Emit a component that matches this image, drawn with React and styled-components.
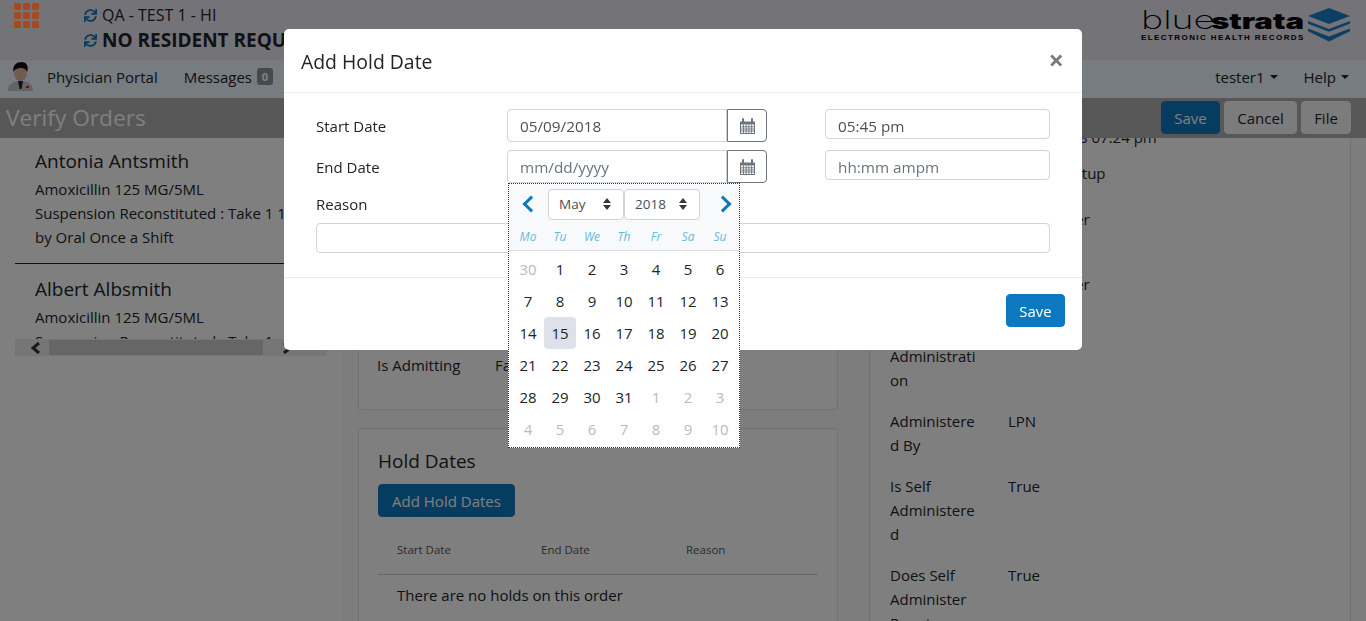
import React from "react";
import styled, { createGlobalStyle } from "styled-components";
import { FaSync } from "react-icons/fa";

const GlobalStyle = createGlobalStyle`
  html, body {
    margin: 0;
    height: 100%;
    overflow: hidden;
    background: #fafafa;
    color: #212529;
    font-family: "Open Sans", "Noto Sans", sans-serif;
    font-size: 15px;
    line-height: 24px;
  }
  * { box-sizing: border-box; }
`;

const WEEK = ["Mo", "Tu", "We", "Th", "Fr", "Sa", "Su"];
const DAYS = [
  [30, true], [1], [2], [3], [4], [5], [6],
  [7], [8], [9], [10], [11], [12], [13],
  [14], [15, false, true], [16], [17], [18], [19], [20],
  [21], [22], [23], [24], [25], [26], [27],
  [28], [29], [30], [31], [1, true], [2, true], [3, true],
  [4, true], [5, true], [6, true], [7, true], [8, true], [9, true], [10, true],
];

const CalendarIcon = () => (
  <svg width="15" height="16" viewBox="0 0 15 16">
    <path d="M0 3.5h15V16H0z" fill="#6c757d" />
    <path d="M1 6.5h13v8.5H1z" fill="#fff" />
    <path d="M1 8.8h13M1 11h13M1 13h13M3.5 6.5V15M6.2 6.5V15M8.9 6.5V15M11.6 6.5V15" stroke="#6c757d" strokeWidth="0.9" />
    <path d="M3 1v3.5M12 1v3.5" stroke="#6c757d" strokeWidth="2" strokeLinecap="round" />
  </svg>
);

const SortArrows = () => (
  <svg width="8" height="12" viewBox="0 0 8 12">
    <path d="M4 0l4 5H0zM4 12L0 7h8z" fill="#343a40" />
  </svg>
);

const Avatar = () => (
  <svg width="27" height="30" viewBox="0 0 27 30">
    <path d="M1 29c0-7 5-10 12.5-10S26 22 26 29z" fill="#c8c8c8" />
    <path d="M11 19h5l-1.5 8h-2z" fill="#222" />
    <ellipse cx="13.5" cy="11" rx="6.5" ry="8" fill="#e0b9a0" />
    <path d="M6.5 10C5 3 10 0 14.500 0 20 0 22 5 20 10c-1-3-3-4-6-4-4 0-6 1-7.500 4z" fill="#111" />
    <path d="M19 24h3v2h-3z" fill="#d22" />
  </svg>
);

const StackLogo = () => (
  <svg width="44" height="34" viewBox="0 0 44 34">
    <path d="M22 0l21 8-21 8L1 8z" fill="#1a7fc8" />
    <path d="M1 13l21 8 21-8v2.800l-21 8-21-8zM1 20.500l21 8 21-8v2.800L22 33.500 1 23.300z" fill="#1a7fc8" />
  </svg>
);

const Header = styled.header`
  display: flex;
  height: 60px;
  padding: 3px 15px 0 14px;
  background: #e8e6f0;
`;

const AppGrid = styled.div`
  position: relative;
  z-index: 1;
  display: grid;
  grid-template-columns: repeat(3, 7px);
  grid-auto-rows: 7px;
  gap: 2px;
  width: 25px;
  height: 25px;
  & > i {
    display: block;
    border-radius: 1.5px;
    background: #a8481f;
  }
`;

const Status = styled.div`
  margin-left: 45px;
  padding-top: 1px;
`;

const StatusLine = styled.div`
  display: flex;
  align-items: center;
  gap: 5px;
  height: ${(p) => (p.$big ? "24px" : "22px")};
  margin-bottom: ${(p) => (p.$big ? "0" : "2px")};
  font-size: ${(p) => (p.$big ? "19px" : "16px")};
  font-weight: ${(p) => (p.$big ? 700 : 400)};
  white-space: nowrap;
  svg {
    color: #1278bd;
    font-size: 13px;
    flex: none;
  }
`;

const Logo = styled.div`
  margin-left: auto;
  display: flex;
  gap: 2px;
  padding-top: 5px;
  color: #000;
`;

const LogoWords = styled.div`
  display: flex;
  flex-direction: column;
  align-items: flex-start;
`;

const LogoName = styled.div`
  display: flex;
  align-items: baseline;
  height: 24px;
  font-family: Inter, sans-serif;
  line-height: 24px;
  white-space: nowrap;
`;

const LogoThin = styled.span`
  display: inline-block;
  width: 70px;
  font-size: 25px;
  font-weight: 200;
  transform: scaleX(1.5);
  transform-origin: left;
`;

const LogoBold = styled.span`
  display: inline-block;
  width: 94px;
  font-size: 21px;
  font-weight: 900;
  transform: scaleX(1.48);
  transform-origin: left;
`;

const LogoTag = styled.div`
  font-family: "Liberation Sans", sans-serif;
  font-size: 8px;
  line-height: 12px;
  font-weight: 700;
  letter-spacing: 1.420px;
  white-space: nowrap;
`;

const NavBar = styled.nav`
  display: flex;
  align-items: center;
  height: 38px;
  padding: 0 17px 5px 7px;
  background: #ecf8ff;
`;

const NavLink = styled.span`
  display: flex;
  align-items: center;
  gap: 5px;
  margin-left: ${(p) => p.$left || "0"};
  color: #212529;
`;

const Badge = styled.span`
  display: inline-block;
  width: 16px;
  height: 17px;
  border-radius: 3px;
  background: #8f949a;
  color: #fff;
  font-size: 11px;
  font-weight: 700;
  line-height: 17px;
  text-align: center;
`;

const Caret = styled.i`
  display: inline-block;
  border-top: 4.500px solid #212529;
  border-left: 4.500px solid transparent;
  border-right: 4.500px solid transparent;
`;

const Toolbar = styled.div`
  display: flex;
  align-items: center;
  gap: 4px;
  height: 40px;
  padding: 0 15px 1px 6px;
  background: #aeaeae;
`;

const PageTitle = styled.h1`
  flex: 1;
  margin: 0;
  color: #fff;
  font-size: 22.700px;
  font-weight: 400;
  line-height: 40px;
`;

const Button = styled.button`
  width: ${(p) => p.$w};
  height: 33px;
  padding: 0;
  border: 1px solid ${(p) => (p.$primary ? "#0b78bf" : "#f8f9fa")};
  border-radius: 4px;
  background: ${(p) => (p.$primary ? "#0b78bf" : "#f8f9fa")};
  color: ${(p) => (p.$primary ? "#fff" : "#212529")};
  font: inherit;
`;

const Main = styled.main`
  display: flex;
  height: 483px;
  overflow: hidden;
`;

const ListColumn = styled.section`
  flex: none;
  width: 342px;
  padding: 0 15px;
  background: #fff;
`;

const ListScroller = styled.div`
  height: 218px;
  overflow: hidden;
  display: flex;
  flex-direction: column;
`;

const ListBody = styled.div`
  flex: none;
  height: 201px;
  overflow: hidden;
`;

const ListItem = styled.div`
  margin-top: ${(p) => (p.$last ? "2px" : "0")};
  padding: 8px 0 14px 20px;
  border-bottom: ${(p) => (p.$last ? "none" : "1px solid #222")};
  h3 {
    margin: 0 0 1px;
    font-size: 19px;
    font-weight: 400;
    line-height: 30px;
    white-space: nowrap;
  }
  p {
    margin: 0;
    line-height: 24px;
    white-space: nowrap;
  }
`;

const ScrollBar = styled.div`
  flex: none;
  display: flex;
  align-items: center;
  height: 17px;
  background: #ececec;
`;

const ScrollThumb = styled.div`
  flex: none;
  width: 214px;
  height: 15px;
  background: #cdcdcd;
`;

const ScrollArrow = styled.svg`
  flex: none;
  width: ${(p) => p.$w};
  height: 12px;
`;

const MiddleColumn = styled.section`
  flex: none;
  width: 480px;
  margin-left: 16px;
`;

const Card = styled.div`
  border: 1px solid #e3e3e3;
  border-radius: 4px;
  background: #fff;
`;

const AdmitCard = styled(Card)`
  height: 272px;
  margin-bottom: 18px;
  padding: 215px 18px 0;
  border-top: none;
  border-radius: 0 0 4px 4px;
`;

const DetailLine = styled.div`
  display: grid;
  grid-template-columns: 118px 1fr;
`;

const HoldCard = styled(Card)`
  padding: 19px 19px;
  h2 {
    margin: 0 0 10px;
    font-size: 19px;
    font-weight: 400;
    line-height: 26px;
  }
`;

const HoldTable = styled.div`
  margin-top: 21px;
`;

const HoldHead = styled.div`
  display: grid;
  grid-template-columns: 144px 145px 1fr;
  padding: 0 19px 12px;
  border-bottom: 1px solid #cfcfcf;
  color: #555;
  font-size: 11.500px;
  line-height: 24px;
`;

const HoldEmpty = styled.div`
  padding: 8px 19px;
`;

const DetailColumn = styled.section`
  flex: none;
  width: 482px;
  margin-left: 31px;
`;

const DetailCard = styled(Card)`
  margin-top: -14px;
  height: 520px;
  padding: 0 20px;
  overflow: hidden;
`;

const DetailRow = styled.div`
  display: grid;
  grid-template-columns: 88px 1fr;
  column-gap: 30px;
  padding-bottom: ${(p) => p.$after || "17px"};
  span:first-child {
    overflow-wrap: anywhere;
  }
`;

const Backdrop = styled.div`
  position: fixed;
  inset: 0;
  background: rgba(0, 0, 0, 0.5);
`;

const Modal = styled.div`
  position: fixed;
  top: 29px;
  left: 284px;
  width: 798px;
  height: 321px;
  border-radius: 5px;
  background: #fff;
`;

const ModalHeader = styled.div`
  display: flex;
  align-items: center;
  justify-content: space-between;
  height: 64px;
  padding: 4px 18px 2px 17px;
  border-bottom: 1px solid #e9ecef;
  h5 {
    margin: 0;
    font-size: 19.400px;
    font-weight: 400;
  }
`;

const CloseMark = styled.span`
  margin-top: -4px;
  color: #7b7b7b;
  font-size: 27px;
  font-weight: 700;
  line-height: 24px;
`;

const ModalBody = styled.div`
  height: 185px;
  padding: 16px 32px 0;
  border-bottom: 1px solid #e9ecef;
`;

const FormRow = styled.div`
  position: relative;
  display: grid;
  grid-template-columns: 191px 260px 225px;
  height: 33px;
  margin-bottom: 8px;
  line-height: 35px;
`;

const TimeSlot = styled.div`
  width: 225px;
  margin-left: 58px;
`;

const DateGroup = styled.div`
  display: flex;
  width: 260px;
  height: 33px;
`;

const TextInput = styled.input`
  display: block;
  width: 100%;
  height: 30px;
  padding: 4px 12px 0;
  border: 1px solid #ced4da;
  border-radius: 4px;
  background: #fff;
  color: #495057;
  font: inherit;
  font-size: 15.300px;
  outline: none;
  &::placeholder {
    color: #6c757d;
    opacity: 1;
  }
`;

const DateInput = styled(TextInput)`
  flex: 1;
  height: 33px;
  padding-top: 2px;
  border-radius: 4px 0 0 4px;
`;

const CalendarButton = styled.button`
  display: flex;
  align-items: center;
  justify-content: center;
  flex: none;
  width: 40px;
  height: 33px;
  padding: 0;
  border: 1px solid #6c757d;
  border-radius: 0 4px 4px 0;
  background: #fff;
`;

const ReasonLabel = styled.div`
  margin-top: 9px;
  margin-bottom: 7px;
  line-height: 24px;
`;

const ModalFooter = styled.div`
  display: flex;
  justify-content: flex-end;
  padding: 16px 17px;
`;

const Picker = styled.div`
  position: absolute;
  z-index: 2;
  top: 33px;
  left: 192px;
  width: 232px;
  height: 265px;
  border: 1px dotted #333;
  background: #fff;
  line-height: 24px;
`;

const PickerHead = styled.div`
  height: 67px;
  padding-top: 4px;
  border-bottom: 1px solid #dfdfdf;
  background: #f8f9fa;
`;

const PickerNav = styled.div`
  display: flex;
  align-items: center;
  height: 32px;
  margin-bottom: 3px;
`;

const Chevron = styled.i`
  display: block;
  flex: none;
  width: 12px;
  height: 12px;
  margin: ${(p) => (p.$right ? "0 10px 0 17px" : "0 11px 0 16px")};
  border-top: 3px solid #0b78bf;
  border-left: 3px solid #0b78bf;
  transform: rotate(${(p) => (p.$right ? "135deg" : "-45deg")});
`;

const SelectBox = styled.div`
  display: flex;
  align-items: center;
  justify-content: space-between;
  width: ${(p) => p.$w};
  height: 31px;
  padding: 0 12px 0 10px;
  border: 1px solid #ced4da;
  border-radius: 4px;
  background: #fff;
  color: #495057;
  font-size: 13.500px;
`;

const WeekRow = styled.div`
  display: grid;
  grid-template-columns: repeat(7, 32px);
  justify-content: center;
  color: #5bc0de;
  font-size: 12px;
  font-style: italic;
  line-height: 28px;
  text-align: center;
`;

const DayGrid = styled.div`
  display: grid;
  grid-template-columns: repeat(7, 32px);
  grid-auto-rows: 32px;
  justify-content: center;
  padding-top: 2px;
`;

const Day = styled.div`
  border-radius: 4px;
  background: ${(p) => (p.$today ? "#dee2e8" : "transparent")};
  color: ${(p) => (p.$muted ? "#b9bcbf" : "#212529")};
  line-height: 32px;
  text-align: center;
`;

const App = () => {
  return (
    <>
      <GlobalStyle />
      <Header>
        <AppGrid>
          {Array.from({ length: 9 }, (_, i) => (
            <i key={i} />
          ))}
        </AppGrid>
        <Status>
          <StatusLine>
            <FaSync /> QA - TEST 1 - HI
          </StatusLine>
          <StatusLine $big>
            <FaSync /> NO RESIDENT REQUESTS
          </StatusLine>
        </Status>
        <Logo>
          <LogoWords>
            <LogoName>
              <LogoThin>blue</LogoThin>
              <LogoBold>strata</LogoBold>
            </LogoName>
            <LogoTag>ELECTRONIC HEALTH RECORDS</LogoTag>
          </LogoWords>
          <StackLogo />
        </Logo>
      </Header>
      <NavBar>
        <Avatar />
        <NavLink $left="13px">Physician Portal</NavLink>
        <NavLink $left="26px">
          Messages <Badge>0</Badge>
        </NavLink>
        <NavLink $left="auto">
          tester1 <Caret />
        </NavLink>
        <NavLink $left="26px">
          Help <Caret />
        </NavLink>
      </NavBar>
      <Toolbar>
        <PageTitle>Verify Orders</PageTitle>
        <Button $primary $w="59px">Save</Button>
        <Button $w="73px">Cancel</Button>
        <Button $w="50px">File</Button>
      </Toolbar>
      <Main>
        <ListColumn>
          <ListScroller>
            <ListBody>
              <ListItem>
                <h3>Antonia Antsmith</h3>
                <p>
                  Amoxicillin 125 MG/5ML
                  <br />
                  Suspension Reconstituted : Take 1 1
                  <br />
                  by Oral Once a Shift
                </p>
              </ListItem>
              <ListItem $last>
                <h3>Albert Albsmith</h3>
                <p>
                  Amoxicillin 125 MG/5ML
                  <br />
                  Suspension Reconstituted : Take 1
                  <br />
                  by Oral Once a Shift
                </p>
              </ListItem>
            </ListBody>
            <ScrollBar>
              <ScrollArrow $w="34px" viewBox="0 0 34 12">
                <path d="M24 1l-6 5 6 5" fill="none" stroke="#333" strokeWidth="3" />
              </ScrollArrow>
              <ScrollThumb />
              <ScrollArrow $w="48px" viewBox="0 0 48 12">
                <path d="M21 1l6 5-6 5" fill="none" stroke="#333" strokeWidth="3" />
              </ScrollArrow>
            </ScrollBar>
          </ListScroller>
        </ListColumn>
        <MiddleColumn>
          <AdmitCard>
            <DetailLine>
              <span>Is Admitting</span>
              <span>False</span>
            </DetailLine>
          </AdmitCard>
          <HoldCard>
            <h2>Hold Dates</h2>
            <Button $primary $w="137px">Add Hold Dates</Button>
            <HoldTable>
              <HoldHead>
                <span>Start Date</span>
                <span>End Date</span>
                <span>Reason</span>
              </HoldHead>
              <HoldEmpty>There are no holds on this order</HoldEmpty>
            </HoldTable>
          </HoldCard>
        </MiddleColumn>
        <DetailColumn>
          <DetailCard>
            <DetailRow $after="12px">
              <span>Verified</span>
              <span>05/09/2018 07:24 pm</span>
            </DetailRow>
            <DetailRow $after="22px">
              <span>Type</span>
              <span>Regular Setup</span>
            </DetailRow>
            <DetailRow>
              <span>Created By Type</span>
              <span>Practitioner</span>
            </DetailRow>
            <DetailRow $after="24px">
              <span>Verified By</span>
              <span>Practitioner</span>
            </DetailRow>
            <DetailRow>
              <span>Route of Administration</span>
              <span />
            </DetailRow>
            <DetailRow>
              <span>Administered By</span>
              <span>LPN</span>
            </DetailRow>
            <DetailRow>
              <span>Is Self Administered</span>
              <span>True</span>
            </DetailRow>
            <DetailRow>
              <span>Does Self Administer Require</span>
              <span>True</span>
            </DetailRow>
          </DetailCard>
        </DetailColumn>
      </Main>
      <Backdrop />
      <Modal>
        <ModalHeader>
          <h5>Add Hold Date</h5>
          <CloseMark>×</CloseMark>
        </ModalHeader>
        <ModalBody>
          <FormRow>
            <span>Start Date</span>
            <DateGroup>
              <DateInput readOnly value="05/09/2018" />
              <CalendarButton>
                <CalendarIcon />
              </CalendarButton>
            </DateGroup>
            <TimeSlot>
              <TextInput readOnly value="05:45 pm" />
            </TimeSlot>
          </FormRow>
          <FormRow>
            <span>End Date</span>
            <DateGroup>
              <DateInput readOnly placeholder="mm/dd/yyyy" />
              <CalendarButton>
                <CalendarIcon />
              </CalendarButton>
            </DateGroup>
            <TimeSlot>
              <TextInput readOnly placeholder="hh:mm ampm" />
            </TimeSlot>
            <Picker>
              <PickerHead>
                <PickerNav>
                  <Chevron />
                  <SelectBox $w="76px">
                    May <SortArrows />
                  </SelectBox>
                  <SelectBox $w="76px">
                    2018 <SortArrows />
                  </SelectBox>
                  <Chevron $right />
                </PickerNav>
                <WeekRow>
                  {WEEK.map((d) => (
                    <span key={d}>{d}</span>
                  ))}
                </WeekRow>
              </PickerHead>
              <DayGrid>
                {DAYS.map(([n, muted, today], i) => (
                  <Day key={i} $muted={muted} $today={today}>
                    {n}
                  </Day>
                ))}
              </DayGrid>
            </Picker>
          </FormRow>
          <ReasonLabel>Reason</ReasonLabel>
          <TextInput readOnly />
        </ModalBody>
        <ModalFooter>
          <Button $primary $w="59px">Save</Button>
        </ModalFooter>
      </Modal>
    </>
  );
};

export default App;
